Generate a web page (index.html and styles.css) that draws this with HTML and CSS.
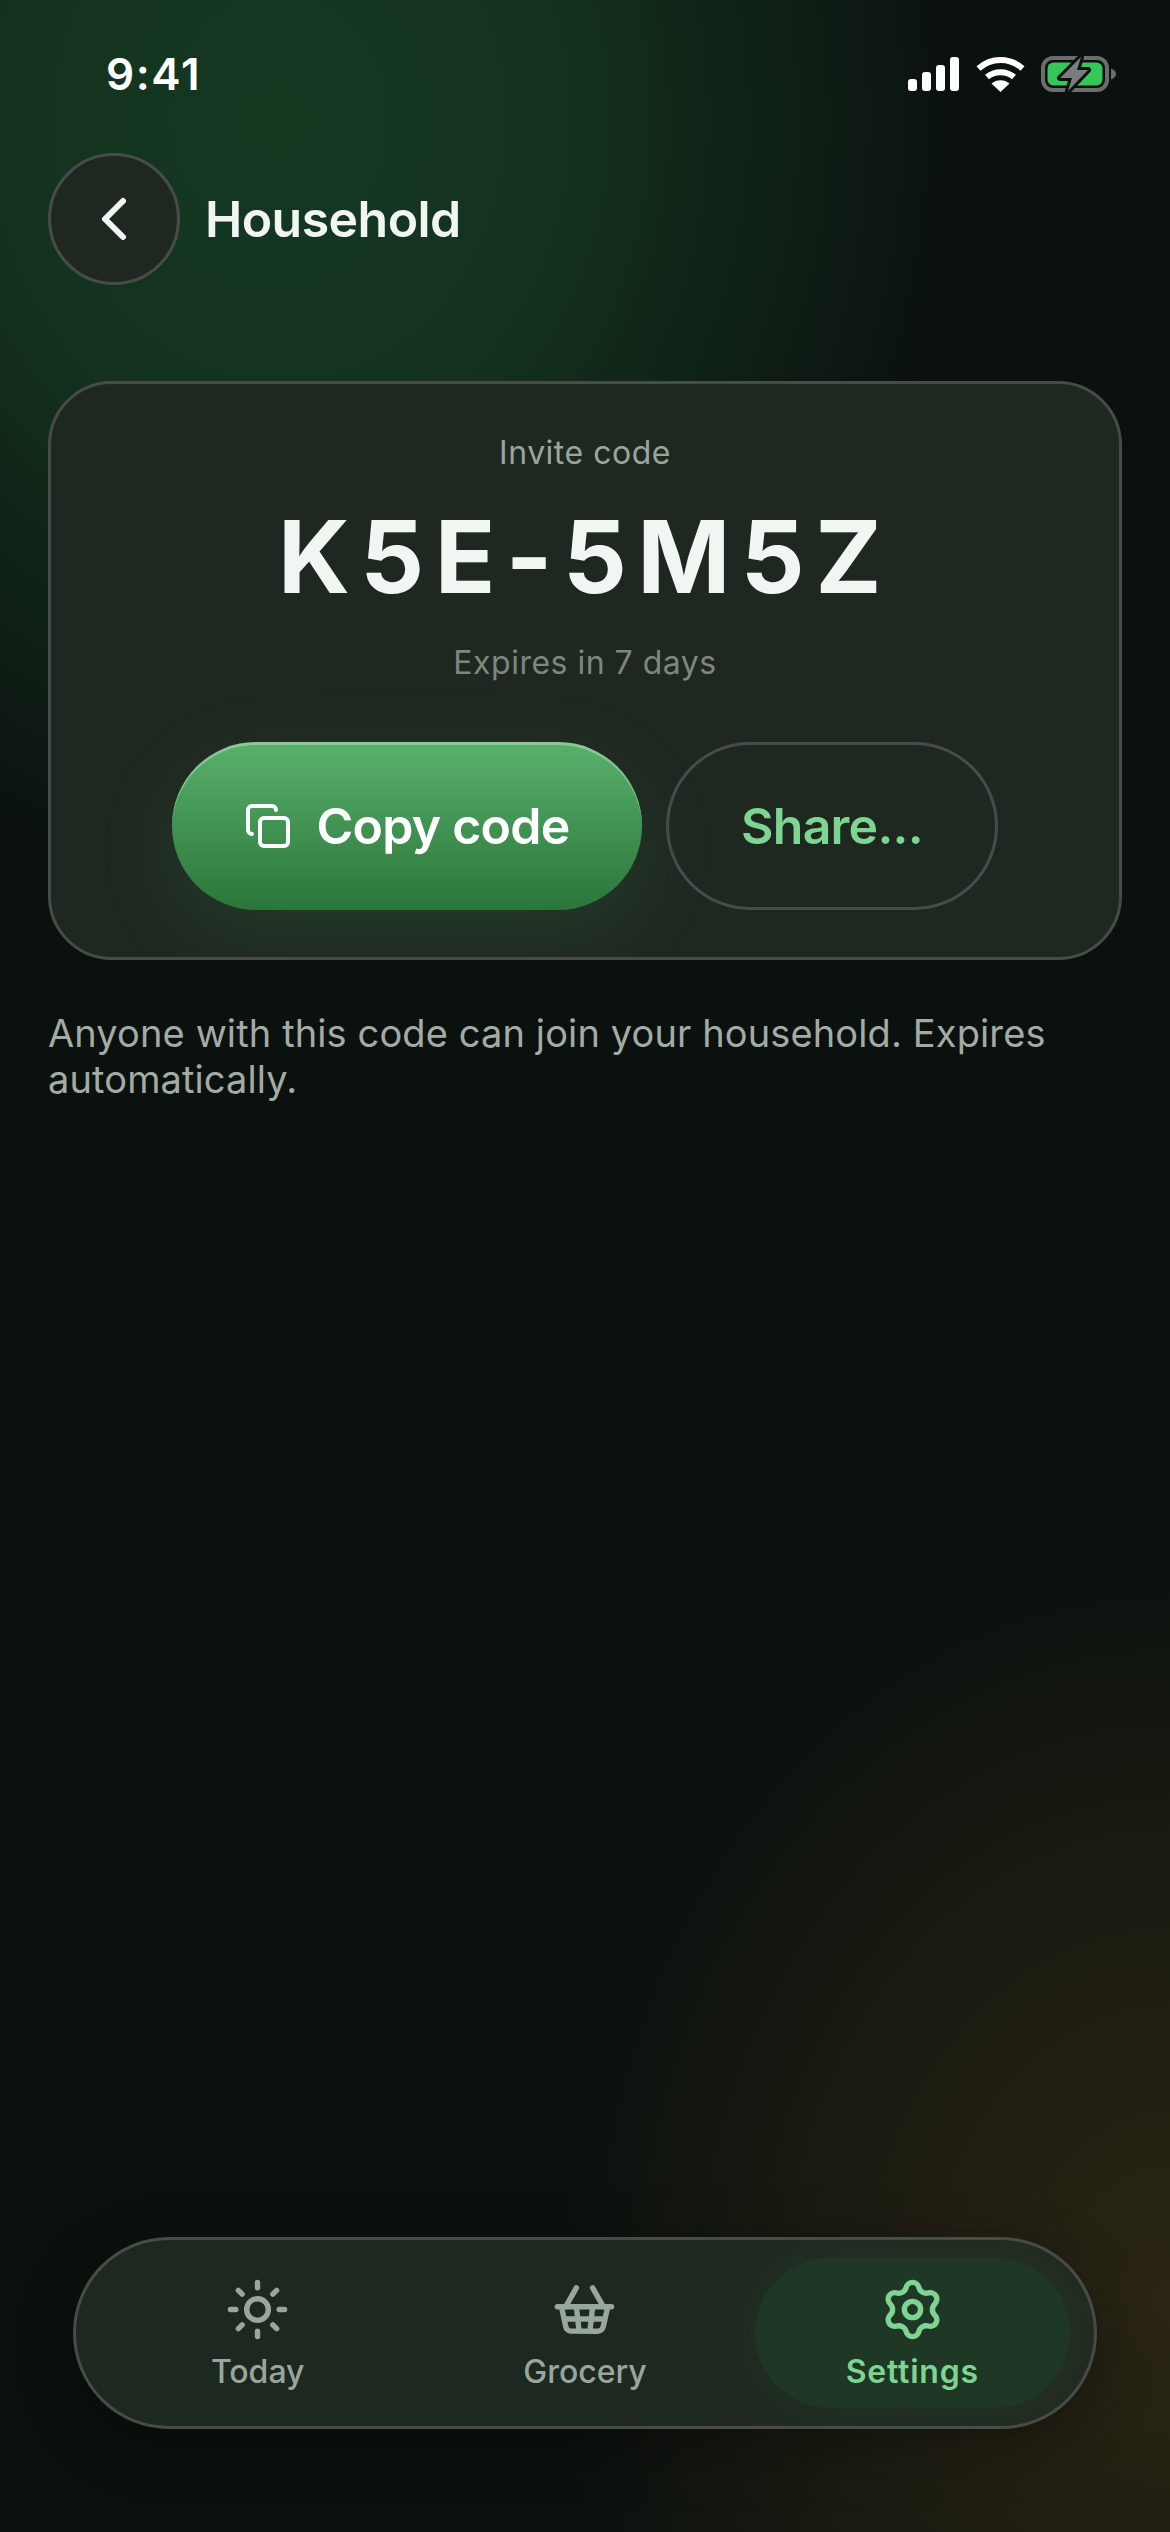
FILE: index.html
```html
<!DOCTYPE html>
<html>
<head>
    <meta charset="utf-8">
    <title>Household</title>
    <link rel="stylesheet" href="styles.css">
</head>
<body>
<div class="screen">

    <div class="statusBar">
        <span class="clock">9:41</span>
        <div class="statusIcons">
            <svg class="signal" width="52" height="34" viewBox="0 0 52 34" fill="#fff">
                <rect x="0" y="22" width="9" height="12" rx="3"/>
                <rect x="14" y="15" width="9" height="19" rx="3"/>
                <rect x="28" y="8" width="9" height="26" rx="3"/>
                <rect x="42" y="0" width="9" height="34" rx="3"/>
            </svg>
            <svg class="wifi" width="49" height="36" viewBox="0 0 49 36" fill="none" stroke="#fff" stroke-width="6">
                <path d="M2.5 12.5C15 1 34 1 46.5 12.5"/>
                <path d="M11 21C18.500 14.500 30.500 14.500 38 21"/>
                <path d="M24.500 36L15.500 27.500C20.500 23 28.500 23 33.500 27.500Z" fill="#fff" stroke="none"/>
            </svg>
            <svg class="battery" width="76" height="38" viewBox="0 0 76 38">
                <rect x="2" y="3" width="64" height="32" rx="10" fill="none" stroke="#6b6e6c" stroke-width="4"/>
                <rect x="6.500" y="7.500" width="55" height="23" rx="6" fill="#34c759"/>
                <path d="M70 13.500C73 14.500 75 16.500 75 19C75 21.500 73 23.500 70 24.500Z" fill="#6b6e6c"/>
                <path d="M40 2L19 23H31L27 36L47 15H36Z" fill="#7a7d7b" stroke="#0b110e" stroke-width="6" stroke-linejoin="round" paint-order="stroke"/>
            </svg>
        </div>
    </div>

    <div class="header">
        <div class="backBtn">
            <svg width="72" height="72" viewBox="0 0 24 24" fill="none" stroke="#f2f6f2" stroke-width="2" stroke-linecap="round" stroke-linejoin="round">
                <path d="m15 18-6-6 6-6"/>
            </svg>
        </div>
        <span class="pageTitle">Household</span>
    </div>

    <div class="inviteCard">
        <div class="inviteLabel">Invite code</div>
        <div class="inviteCode">K5E-5M5Z</div>
        <div class="inviteExpiry">Expires in 7 days</div>
        <div class="actions">
            <div class="btn btnCopy">
                <svg width="48" height="48" viewBox="0 0 24 24" fill="none" stroke="#fff" stroke-width="2" stroke-linecap="round" stroke-linejoin="round">
                    <rect x="8" y="8" width="14" height="14" rx="2"/>
                    <path d="M4 16c-1.100 0-2-.9-2-2V4c0-1.100.9-2 2-2h10c1.100 0 2 .9 2 2"/>
                </svg>
                <span>Copy code</span>
            </div>
            <div class="btn btnShare">Share...</div>
        </div>
    </div>

    <p class="helpText">Anyone with this code can join your household. Expires automatically.</p>

    <div class="tabBar">
        <div class="tab">
            <svg width="65" height="65" viewBox="0 0 24 24" fill="none" stroke="currentColor" stroke-width="2" stroke-linecap="round" stroke-linejoin="round">
                <circle cx="12" cy="12" r="4"/>
                <path d="M12 2v2M12 20v2M4.930 4.930l1.410 1.410M17.660 17.660l1.410 1.410M2 12h2M20 12h2M6.340 17.660l-1.410 1.410M19.070 4.930l-1.410 1.410"/>
            </svg>
            <span>Today</span>
        </div>
        <div class="tab">
            <svg width="65" height="65" viewBox="0 0 24 24" fill="none" stroke="currentColor" stroke-width="2" stroke-linecap="round" stroke-linejoin="round">
                <path d="m15 11-1 9M19 11l-4-7M2 11h20M3.500 11l1.600 7.400a2 2 0 0 0 2 1.600h9.800a2 2 0 0 0 2-1.600l1.700-7.400M4.500 15.500h15M5 11l4-7M9 11l1 9"/>
            </svg>
            <span>Grocery</span>
        </div>
        <div class="tab tabActive">
            <svg width="65" height="65" viewBox="0 0 24 24" fill="none" stroke="currentColor" stroke-width="2" stroke-linecap="round" stroke-linejoin="round">
                <path d="M9.667 3.836A2.400 2.400 0 0 1 14.333 3.836A2.850 2.850 0 0 0 17.904 5.898A2.400 2.400 0 0 1 20.237 9.938A2.850 2.850 0 0 0 20.237 14.062A2.400 2.400 0 0 1 17.904 18.102A2.850 2.850 0 0 0 14.333 20.164A2.400 2.400 0 0 1 9.667 20.164A2.850 2.850 0 0 0 6.096 18.102A2.400 2.400 0 0 1 3.763 14.062A2.850 2.850 0 0 0 3.763 9.938A2.400 2.400 0 0 1 6.096 5.898A2.850 2.850 0 0 0 9.667 3.836Z"/>
                <circle cx="12" cy="12" r="3"/>
            </svg>
            <span>Settings</span>
        </div>
    </div>

</div>
</body>
</html>
```

FILE: styles.css
```css
* {
    box-sizing: border-box;
}

html, body {
    margin: 0;
    padding: 0;
    background-color: #0b110e;
}

body {
    font-family: Inter, "Noto Sans", sans-serif;
}

.screen {
    width: 1170px;
    height: 2532px;
    padding: 0 48px;
    display: flex;
    flex-direction: column;
    overflow: hidden;
    background-color: #0b110e;
    background-image:
        radial-gradient(ellipse 680px 780px at 280px 120px, rgb(21, 56, 33) 0%, rgba(21, 56, 33, 0.85) 40%, rgba(21, 56, 33, 0) 100%),
        radial-gradient(ellipse 620px 760px at 1170px 2300px, rgb(41, 36, 20) 0%, rgba(41, 36, 20, 0.75) 35%, rgba(41, 36, 20, 0) 100%);
}

/* Status bar */
.statusBar {
    height: 148px;
    padding: 0 5px 0 58px;
    display: flex;
    align-items: center;
    justify-content: space-between;
    flex-shrink: 0;
}

.clock {
    color: #fff;
    font-size: 44px;
    font-weight: 600;
    letter-spacing: 1.6px;
}

.statusIcons {
    display: flex;
    align-items: center;
    gap: 16px;
}

/* Header */
.header {
    margin-top: 5px;
    display: flex;
    align-items: center;
    gap: 25px;
    flex-shrink: 0;
}

.backBtn {
    width: 132px;
    height: 132px;
    border: 3px solid #474c48;
    border-radius: 50%;
    background-color: #1f2721;
    display: flex;
    align-items: center;
    justify-content: center;
}

.pageTitle {
    color: #f2f6f2;
    font-size: 50px;
    font-weight: 600;
    letter-spacing: -0.55px;
}

/* Invite card */
.inviteCard {
    margin-top: 96px;
    padding: 47px 0;
    border: 3px solid #474c48;
    border-radius: 64px;
    background-color: #1f2721;
    text-align: center;
    overflow: hidden;
    flex-shrink: 0;
}

.inviteLabel {
    color: #98a69c;
    font-size: 32px;
    line-height: 44px;
    letter-spacing: 0.5px;
}

.inviteCode {
    margin-top: 22px;
    color: #f2f6f2;
    font-size: 100px;
    font-weight: 700;
    line-height: 120px;
    letter-spacing: 10.4px;
}

.inviteExpiry {
    margin-top: 24px;
    color: #7b877f;
    font-size: 32px;
    line-height: 44px;
    letter-spacing: 0.5px;
}

.actions {
    margin-top: 57px;
    display: flex;
    justify-content: center;
    gap: 24px;
}

.btn {
    height: 168px;
    border-radius: 84px;
    display: flex;
    align-items: center;
    justify-content: center;
    font-size: 50px;
    font-weight: 600;
    letter-spacing: -0.75px;
}

.btnCopy {
    width: 470px;
    gap: 24px;
    color: #fff;
    background-image: linear-gradient(180deg, #58b16b 0%, #2b753b 100%);
    box-shadow: inset 0 3px 0 rgba(255, 255, 255, 0.3), 0 24px 80px rgba(70, 170, 90, 0.16);
}

.btnShare {
    width: 332px;
    color: #7dd591;
    border: 3px solid #474c48;
}

/* Helper text */
.helpText {
    margin: 50px 0 0;
    color: #a2aca5;
    font-size: 38px;
    line-height: 46px;
    letter-spacing: 0.12px;
    flex-shrink: 0;
}

/* Bottom tabs */
.tabBar {
    margin: auto 25px 103px;
    padding: 18px 24px;
    display: flex;
    gap: 12px;
    border: 3px solid #474c48;
    border-radius: 96px;
    background-color: rgba(34, 46, 38, 0.8);
    box-shadow: 0 16px 60px rgba(0, 0, 0, 0.3);
    flex-shrink: 0;
}

.tab {
    flex: 1;
    height: 150px;
    padding-top: 19px;
    border-radius: 75px;
    display: flex;
    flex-direction: column;
    align-items: center;
    color: #99a69d;
    font-size: 32px;
    font-weight: 500;
}

.tab span {
    margin-top: 10px;
}

.tabActive {
    color: #7dd591;
    background-color: #1f3825;
    box-shadow: 0 0 40px rgba(70, 150, 90, 0.07);
    font-weight: 600;
    letter-spacing: 0.8px;
}
```
